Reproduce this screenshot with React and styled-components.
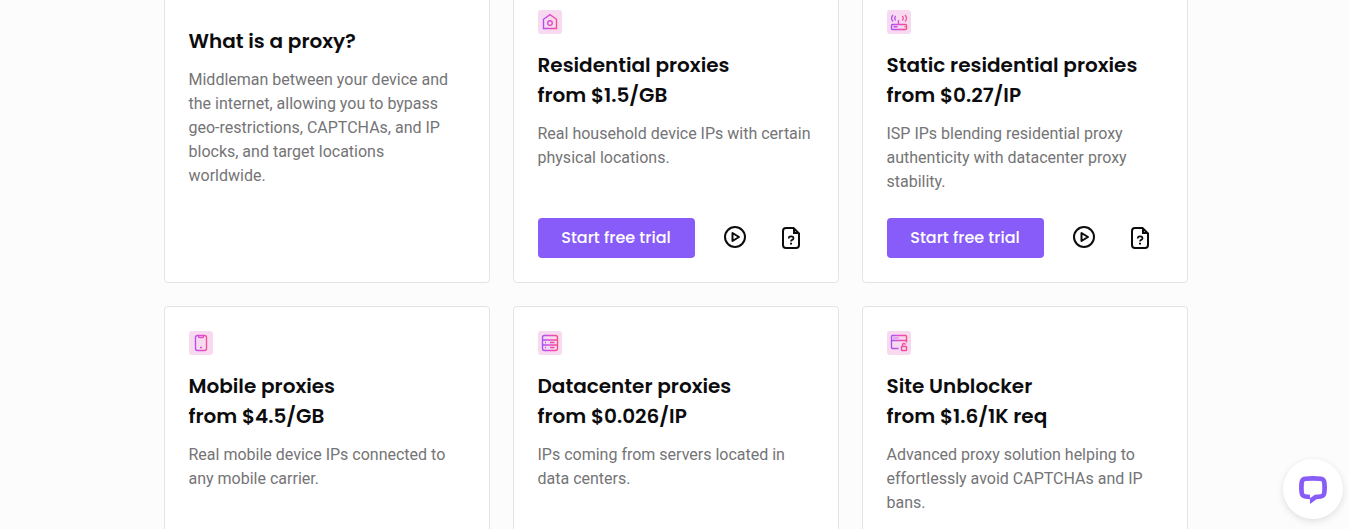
import styled, { createGlobalStyle } from "styled-components";

const GlobalStyle = createGlobalStyle`
  * {
    box-sizing: border-box;
  }

  body {
    margin: 0;
    background-color: #fcfcfc;
    font-family: Roboto, "Liberation Sans", sans-serif;
  }

  h3,
  p {
    margin: 0;
  }
`;

const Page = styled.main`
  height: 529px;
  overflow: hidden;
  padding-left: 163.5px;
`;

const CardGrid = styled.section`
  display: grid;
  grid-template-columns: repeat(3, 326px);
  grid-auto-rows: 298px;
  gap: 23px;
  margin-top: -15px;
`;

const Card = styled.article`
  display: flex;
  flex-direction: column;
  padding: ${({ $intro }) => ($intro ? "40px" : "24px")} 24px 24px;
  border: 1px solid #e4e4e4;
  border-radius: 4px;
  background-color: #fff;
`;

const IconBox = styled.div`
  width: 24px;
  height: 24px;
  margin-bottom: 16px;
  border-radius: 3px;
  background-color: #f8daf0;

  svg {
    display: block;
  }
`;

const Title = styled.h3`
  color: #0c0c0e;
  font-family: Poppins, Inter, sans-serif;
  font-size: 20px;
  font-weight: 600;
  line-height: 30px;
  white-space: nowrap;
`;

const TitleLine = styled.span`
  display: block;
`;

const Description = styled.p`
  margin-top: 12px;
  color: #747476;
  font-size: 16px;
  line-height: 24px;
`;

const Actions = styled.div`
  display: flex;
  align-items: center;
  margin-top: auto;
`;

const TrialButton = styled.button`
  flex-shrink: 0;
  width: 157px;
  height: 40px;
  margin-right: 12px;
  padding: 0 0 2px;
  border: 0;
  border-radius: 4px;
  background-color: #885cf9;
  color: #fff;
  font-family: Poppins, Inter, sans-serif;
  font-size: 16px;
  font-weight: 500;
  cursor: pointer;
`;

const IconLink = styled.a`
  display: flex;
  flex-shrink: 0;
  justify-content: center;
  width: 56px;
  color: #0c0c0e;
`;

const ChatButton = styled.button`
  position: fixed;
  right: 6px;
  bottom: 10px;
  display: flex;
  align-items: center;
  justify-content: center;
  width: 60px;
  height: 60px;
  padding: 2px 0 0;
  border: 0;
  border-radius: 50%;
  background-color: #fff;
  box-shadow: 0 2px 7px rgba(0, 0, 0, 0.12);
`;

const glyphs = {
  house: (
    <>
      <path d="M5.500 9.300 12 4.700l6.500 4.600v9.200h-13z" />
      <circle cx="12" cy="13" r="2.300" />
    </>
  ),
  router: (
    <>
      <rect x="4.500" y="14.500" width="15" height="5" rx="1" />
      <path d="M11.500 14.500V10M6.500 16.700h4M17.500 16.700h1" />
      <path d="M6 5c-1.800 1.800-1.800 4.700 0 6.500M8.700 6c-1.200 1.200-1.200 3.300 0 4.500M18 5c1.800 1.800 1.800 4.700 0 6.500M15.300 6c1.200 1.200 1.200 3.300 0 4.500" />
    </>
  ),
  phone: (
    <>
      <rect x="6.500" y="4.500" width="11" height="15" rx="2" />
      <path d="M9.500 4.500v1q0 1 1 1h3q1 0 1-1v-1M11 16.500h2" />
    </>
  ),
  server: (
    <>
      <rect x="4.500" y="4.500" width="15" height="15" rx="2" />
      <path d="M4.500 9h15M4.500 14h15M7 11.500h1M12 11.500h4.500M7 16.500h1M12 16.500h4.500" />
    </>
  ),
  unblock: (
    <>
      <path d="M11.500 17.500h-6q-1 0-1-1v-11q0-1 1-1h13q1 0 1 1v6M4.500 9.500h15M6.500 7h1M8.500 7h1M10.500 7h1" />
      <rect x="14.500" y="15.500" width="5" height="4" rx=".5" />
      <path d="M15.500 15.500v-1.500q0-1.500 1.500-1.500 1.300 0 1.300 1.200" />
    </>
  ),
};

function ProductIcon({ name }) {
  const gradientId = `gradient-${name}`;

  return (
    <IconBox>
      <svg
        width="24"
        height="24"
        fill="none"
        stroke={`url(#${gradientId})`}
        strokeWidth="1.350"
      >
        <defs>
          <linearGradient
            id={gradientId}
            gradientUnits="userSpaceOnUse"
            x1="4"
            y1="12"
            x2="20"
            y2="12"
          >
            <stop stopColor="#9f50ff" />
            <stop offset=".5" stopColor="#df4dcc" />
            <stop offset="1" stopColor="#fc4b80" />
          </linearGradient>
        </defs>
        {glyphs[name]}
      </svg>
    </IconBox>
  );
}

function PlayIcon() {
  return (
    <svg width="24" height="24" fill="none" stroke="currentColor" strokeWidth="2">
      <circle cx="12" cy="11" r="10" />
      <path d="M9.500 7v8l6.500-4z" strokeLinejoin="round" />
    </svg>
  );
}

function DocsIcon() {
  return (
    <svg width="24" height="24" fill="none" stroke="currentColor" strokeWidth="2">
      <path
        d="M14.500 2H7Q4 2 4 5v14q0 3 3 3h10q3 0 3-3V7.500z"
        strokeLinejoin="round"
      />
      <path d="M15 2v5H20" />
      <path
        d="M9.700 12.500q0-2.200 2.400-2.200t2.400 1.900q0 1.200-1.300 1.700-1.200.5-1.200 1.700"
        strokeWidth="1.700"
      />
      <path d="M12 16.700v1.900" />
    </svg>
  );
}

const products = [
  {
    icon: "house",
    title: "Residential proxies",
    price: "from $1.5/GB",
    text: "Real household device IPs with certain physical locations.",
    trial: true,
  },
  {
    icon: "router",
    title: "Static residential proxies",
    price: "from $0.27/IP",
    text: "ISP IPs blending residential proxy authenticity with datacenter proxy stability.",
    trial: true,
  },
  {
    icon: "phone",
    title: "Mobile proxies",
    price: "from $4.5/GB",
    text: "Real mobile device IPs connected to any mobile carrier.",
  },
  {
    icon: "server",
    title: "Datacenter proxies",
    price: "from $0.026/IP",
    text: "IPs coming from servers located in data centers.",
  },
  {
    icon: "unblock",
    title: "Site Unblocker",
    price: "from $1.6/1K req",
    text: "Advanced proxy solution helping to effortlessly avoid CAPTCHAs and IP bans.",
  },
];

function ProductCard({ product }) {
  return (
    <Card>
      <ProductIcon name={product.icon} />
      <Title>
        <TitleLine>{product.title}</TitleLine>
        <TitleLine>{product.price}</TitleLine>
      </Title>
      <Description>{product.text}</Description>
      {product.trial && (
        <Actions>
          <TrialButton>Start free trial</TrialButton>
          <IconLink>
            <PlayIcon />
          </IconLink>
          <IconLink>
            <DocsIcon />
          </IconLink>
        </Actions>
      )}
    </Card>
  );
}

function App() {
  return (
    <>
      <GlobalStyle />
      <Page>
        <CardGrid>
          <Card $intro>
            <Title>
              <TitleLine>What is a proxy?</TitleLine>
            </Title>
            <Description>
              Middleman between your device and the internet, allowing you to
              bypass geo-restrictions, CAPTCHAs, and IP blocks, and target
              locations worldwide.
            </Description>
          </Card>
          {products.map((product) => (
            <ProductCard key={product.icon} product={product} />
          ))}
        </CardGrid>
      </Page>
      <ChatButton aria-label="Open chat">
        <svg width="28" height="28" fill="#885cf9">
          <path
            fillRule="evenodd"
            d="M6 .4Q14-.4 22 .4 27 1 27.600 6 28.300 11.500 27.600 17 27 22 22 22.700L17.500 23.200 11 28V23.200L6 22.700Q1 22 .4 17-.3 11.500.4 6 1 1 6 .4zM6.500 5Q5.200 5.200 5 6.500 4.500 11.500 5 16.700 5.200 18 6.500 18.200L11 18.700V22.300L15.800 18.800 21.500 18.200Q22.800 18 23 16.700 23.500 11.500 23 6.500 22.800 5.200 21.500 5 14 4.300 6.500 5z"
          />
        </svg>
      </ChatButton>
    </>
  );
}

export default App;
